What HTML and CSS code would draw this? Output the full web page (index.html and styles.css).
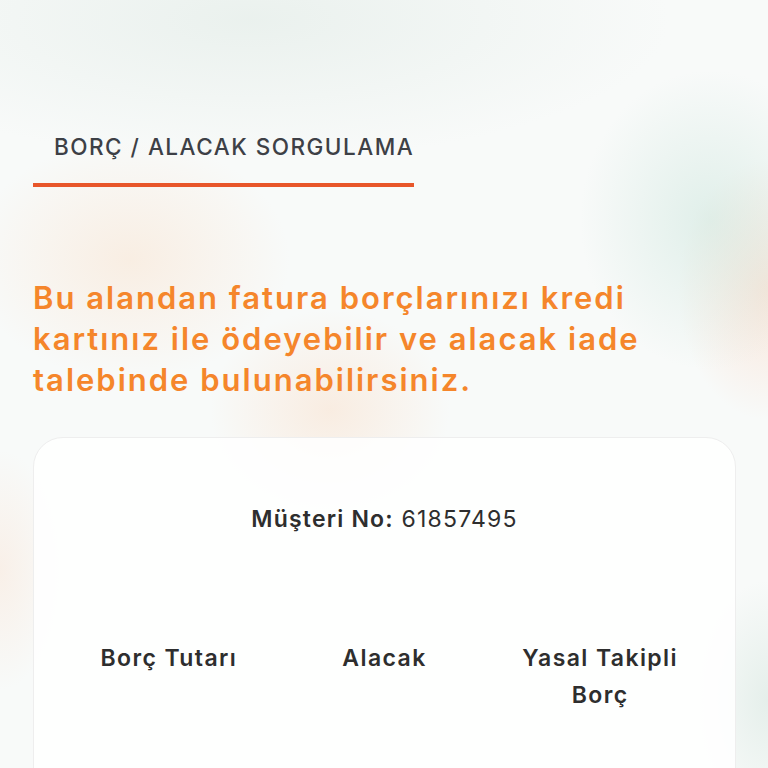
FILE: index.html
```html
<!DOCTYPE html>
<html lang="tr">
<head>
    <meta charset="UTF-8">
    <meta name="viewport" content="width=device-width, initial-scale=1.0">
    <title>Borç / Alacak Sorgulama</title>
    <link rel="stylesheet" href="styles.css">
</head>
<body>
    <div class="page">
        <div class="tabs">
            <div class="tab active">BORÇ / ALACAK SORGULAMA</div>
        </div>
        <h1 class="intro">Bu alandan fatura borçlarınızı kredi kartınız ile ödeyebilir ve alacak iade talebinde bulunabilirsiniz.</h1>
        <div class="card">
            <p class="customer"><strong>Müşteri No:</strong> 61857495</p>
            <div class="summary">
                <div class="summary-item">Borç Tutarı</div>
                <div class="summary-item">Alacak</div>
                <div class="summary-item">Yasal Takipli Borç</div>
            </div>
        </div>
    </div>
</body>
</html>
```

FILE: styles.css
```css
:root {
    --orange: #f5862b;
    --orange-dark: #e8562a;
    --text-dark: #2e2e2e;
    --text-tab: #3d4046;
}

body, html {
    margin: 0;
    padding: 0;
    font-family: 'Inter', 'Noto Sans', sans-serif;
    color: var(--text-dark);
}

/* soft blurred shapes in the background */
body {
    min-height: 100vh;
    background-color: #f8faf9;
    background-image:
        radial-gradient(ellipse 160px 120px at 130px 260px, rgba(250, 215, 185, 0.35), transparent),
        radial-gradient(ellipse 120px 100px at 330px 410px, rgba(250, 205, 170, 0.3), transparent),
        radial-gradient(ellipse 130px 150px at 710px 220px, rgba(200, 228, 218, 0.5), transparent),
        radial-gradient(ellipse 90px 130px at 768px 290px, rgba(250, 205, 180, 0.45), transparent),
        radial-gradient(ellipse 420px 140px at 250px 20px, rgba(225, 235, 230, 0.6), transparent),
        radial-gradient(ellipse 60px 120px at 0px 570px, rgba(250, 220, 200, 0.35), transparent),
        radial-gradient(ellipse 70px 120px at 768px 700px, rgba(210, 228, 220, 0.5), transparent);
}

.page {
    padding: 124px 32px 0 33px;
}

.tabs {
    display: flex;
}

.tab {
    font-size: 22.5px;
    font-weight: 500;
    letter-spacing: 1.5px;
    color: var(--text-tab);
    padding: 9px 0 23px 21px;
    border-bottom: 4px solid var(--orange-dark);
}

.intro {
    margin: 90px 0 0;
    font-size: 31px;
    line-height: 41px;
    font-weight: 600;
    letter-spacing: 2px;
    color: var(--orange);
    max-width: 640px;
}

.card {
    margin-top: 37px;
    background: rgba(255, 255, 255, 0.85);
    border: 1px solid #eeeeee;
    border-radius: 30px;
    padding: 67px 27px 80px;
    min-height: 300px;
}

.customer {
    margin: 0;
    text-align: center;
    font-size: 23px;
    letter-spacing: 1.2px;
}

.customer strong {
    font-weight: 600;
}

.summary {
    display: grid;
    grid-template-columns: repeat(3, 1fr);
    margin-top: 107px;
}

.summary-item {
    text-align: center;
    font-size: 23px;
    line-height: 37px;
    font-weight: 600;
    letter-spacing: 1.4px;
    padding: 0 20px;
}
```
